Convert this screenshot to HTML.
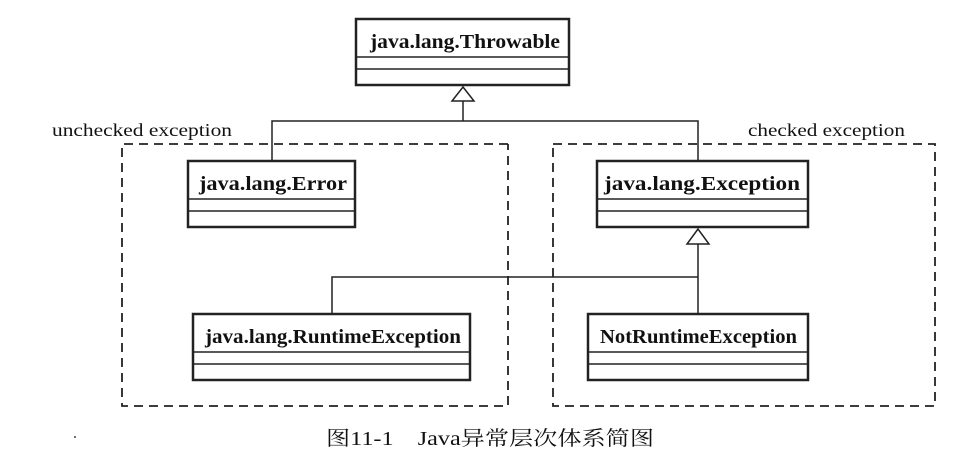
<!DOCTYPE html><html><head><style>body{margin:0;background:#fff}</style></head><body>
<svg width="970" height="471" xmlns="http://www.w3.org/2000/svg" style="display:block;font-family:'Liberation Serif','Noto Serif CJK SC',serif">
<g fill="none" stroke="#222">
<g stroke-width="2.5">
<rect x="356" y="19" width="213" height="66"/>
<rect x="188" y="161" width="167" height="66"/>
<rect x="597" y="161" width="211" height="66"/>
<rect x="193" y="314" width="277" height="66"/>
<rect x="588" y="314" width="220" height="66"/>
</g>
<g stroke-width="1.5">
<path d="M356 57H569M356 69H569M188 199H355M188 211H355M597 199H808M597 211H808M193 352H470M193 364H470M588 352H808M588 364H808"/>
<path d="M463 101V121M272 161V121H698V161M698 244V314M332 314V277H698"/>
<path d="M463 87L452 101H474Z M698 229L687 244H709Z" fill="#fff"/>
</g>
<g stroke-width="1.8" stroke-dasharray="9,6">
<path d="M508 144H122V406H508V144"/>
<path d="M553 144H935V406H553V144"/>
</g>
</g>
<g font-weight="bold" font-size="20" fill="#111">
<text x="370" y="48" textLength="190" lengthAdjust="spacingAndGlyphs">java.lang.Throwable</text>
<text x="199" y="190" textLength="148" lengthAdjust="spacingAndGlyphs">java.lang.Error</text>
<text x="604" y="190" textLength="196" lengthAdjust="spacingAndGlyphs">java.lang.Exception</text>
<text x="205" y="343" textLength="256" lengthAdjust="spacingAndGlyphs">java.lang.RuntimeException</text>
<text x="600" y="343" textLength="197" lengthAdjust="spacingAndGlyphs">NotRuntimeException</text>
</g>
<g font-size="18" fill="#111">
<text x="52" y="136" textLength="180" lengthAdjust="spacingAndGlyphs">unchecked exception</text>
<text x="748" y="136" textLength="157" lengthAdjust="spacingAndGlyphs">checked exception</text>
<text x="326" y="445" font-size="20" textLength="328" lengthAdjust="spacingAndGlyphs">图11-1　Java异常层次体系简图</text>
</g>
<circle cx="75" cy="437" r="1" fill="#444"/>
</svg>
</body></html>
